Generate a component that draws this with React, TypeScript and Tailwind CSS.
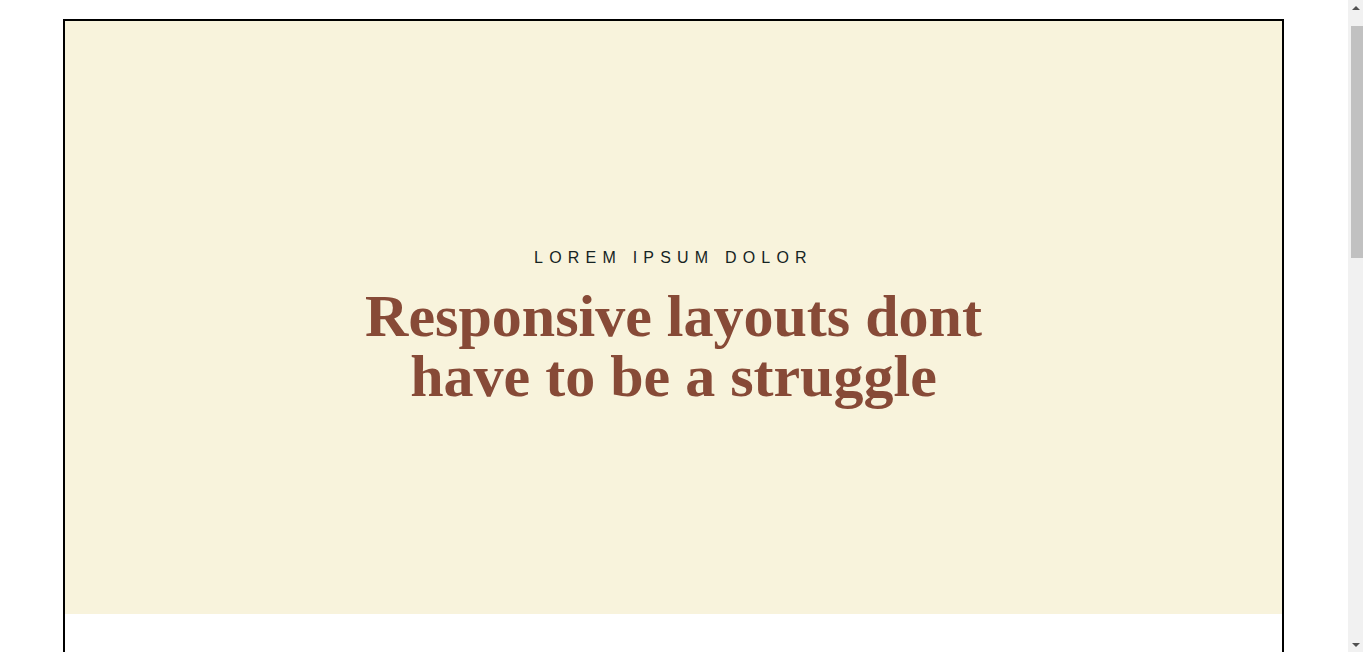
function FakeScrollbar() {
  return (
    <div className="fixed right-0 top-0 flex h-screen w-[15px] flex-col items-center bg-[#f1f1f1]">
      <div className="flex h-[15px] w-full items-center justify-center">
        <div className="h-0 w-0 border-x-[4px] border-b-[4px] border-x-transparent border-b-[#505050]" />
      </div>
      <div className="mt-[11px] ml-[2px] h-[232px] w-[12px] bg-[#c1c1c1]" />
      <div className="flex-1" />
      <div className="flex h-[15px] w-full items-center justify-center">
        <div className="h-0 w-0 border-x-[4px] border-t-[4px] border-x-transparent border-t-[#505050]" />
      </div>
    </div>
  );
}

export default function App() {
  return (
    <div className="min-h-screen bg-white pt-[19px] pr-[15px]">
      <div className="ml-[63px] w-[1221px] border-2 border-black">
        <section className="flex h-[593px] flex-col items-center justify-center bg-[#f8f3dc] pt-[16px] text-center">
          <p className="font-['Liberation_Sans',Arial,sans-serif] text-[16px] leading-[24px] uppercase tracking-[6.2px] text-[#152323]">
            Lorem ipsum dolor
          </p>
          <h1 className="mt-[16px] font-['Liberation_Serif','Times_New_Roman',serif] text-[60px] font-bold leading-[60px] text-[#874a37]">
            Responsive layouts dont
            <br />
            have to be a struggle
          </h1>
        </section>
        <section className="h-[1080px] bg-white" />
      </div>
      <FakeScrollbar />
    </div>
  );
}
